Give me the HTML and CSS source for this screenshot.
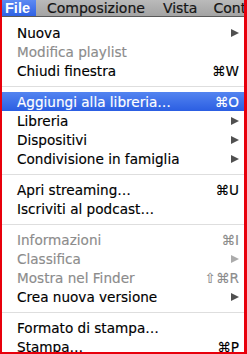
FILE: index.html
```html
<!DOCTYPE html>
<html>
<head>
<meta charset="utf-8">
<link rel="stylesheet" href="styles.css">
</head>
<body>
<div class="frame">
  <div class="menubar">
    <span class="bar-item active">File</span>
    <span class="bar-item comp">Composizione</span>
    <span class="bar-item vista">Vista</span>
    <span class="bar-item ctrl">Controlli</span>
  </div>
  <div class="menu">
    <div class="row"><span class="label">Nuova</span><span class="arrow"></span></div>
    <div class="row disabled"><span class="label">Modifica playlist</span></div>
    <div class="row"><span class="label">Chiudi finestra</span><span class="key">⌘W</span></div>
    <div class="sep"></div>
    <div class="row selected"><span class="label">Aggiungi alla libreria…</span><span class="key">⌘O</span></div>
    <div class="row"><span class="label">Libreria</span><span class="arrow"></span></div>
    <div class="row"><span class="label">Dispositivi</span><span class="arrow"></span></div>
    <div class="row"><span class="label">Condivisione in famiglia</span><span class="arrow"></span></div>
    <div class="sep"></div>
    <div class="row"><span class="label">Apri streaming…</span><span class="key">⌘U</span></div>
    <div class="row"><span class="label">Iscriviti al podcast…</span></div>
    <div class="sep"></div>
    <div class="row disabled"><span class="label">Informazioni</span><span class="key">⌘I</span></div>
    <div class="row disabled"><span class="label">Classifica</span><span class="arrow"></span></div>
    <div class="row disabled"><span class="label">Mostra nel Finder</span><span class="key">⇧⌘R</span></div>
    <div class="row"><span class="label">Crea nuova versione</span><span class="arrow"></span></div>
    <div class="sep"></div>
    <div class="row"><span class="label">Formato di stampa…</span></div>
    <div class="row"><span class="label">Stampa…</span><span class="key">⌘P</span></div>
  </div>
</div>
</body>
</html>
```
FILE: styles.css
```css
html, body {
  margin: 0;
  padding: 0;
  background: #ffffff;
}
body {
  width: 247px;
  height: 354px;
  overflow: hidden;
  font-family: "DejaVu Sans", "Liberation Sans", sans-serif;
}
.frame {
  box-sizing: border-box;
  width: 247px;
  height: 354px;
  border-left: 2px solid #e8000c;
  border-right: 3px solid #e8000c;
  border-bottom: 2px solid #e8000c;
  overflow: hidden;
  display: flex;
  flex-direction: column;
  background: #ffffff;
}
.menubar {
  height: 16px;
  flex: none;
  display: flex;
  align-items: stretch;
  background: linear-gradient(#bababa, #a3a3a3);
  border-bottom: 1px solid #595959;
  white-space: nowrap;
  overflow: hidden;
  font-size: 14px;
  line-height: 16px;
  color: #151515;
  -webkit-text-stroke: 0.2px #151515;
}
.bar-item {
  flex: none;
}
.bar-item.active {
  width: 34px;
  box-sizing: border-box;
  background: linear-gradient(#5d8af2, #2f62e4);
  color: #ffffff;
  -webkit-text-stroke: 0;
  font-family: "Liberation Sans", "DejaVu Sans", sans-serif;
  font-weight: bold;
  font-size: 14.5px;
  padding-left: 3px;
}
.bar-item.comp {
  margin-left: 11px;
}
.bar-item.vista {
  margin-left: 18px;
}
.bar-item.ctrl {
  margin-left: 16px;
}
.menu {
  padding-top: 6px;
  display: flex;
  flex-direction: column;
  font-size: 13.6px;
  color: #000000;
}
.row {
  height: 19px;
  display: flex;
  align-items: center;
  justify-content: space-between;
  padding: 0 5px 0 15px;
  white-space: nowrap;
  -webkit-text-stroke: 0.15px #000000;
}
.row.disabled {
  color: #8c8c8c;
  -webkit-text-stroke: 0.15px #8c8c8c;
}
.row.selected {
  background: linear-gradient(#5384f0, #2b5ee2);
  color: #ffffff;
  -webkit-text-stroke: 0.15px #ffffff;
}
.arrow {
  width: 0;
  height: 0;
  border-top: 4.5px solid transparent;
  border-bottom: 4.5px solid transparent;
  border-left: 8px solid #505050;
}
.disabled .arrow {
  border-left-color: #ababab;
}
.sep {
  height: 12px;
  flex: none;
  display: flex;
  align-items: center;
}
.sep::before {
  content: "";
  display: block;
  width: 100%;
  height: 1px;
  background: #dedede;
}
```
